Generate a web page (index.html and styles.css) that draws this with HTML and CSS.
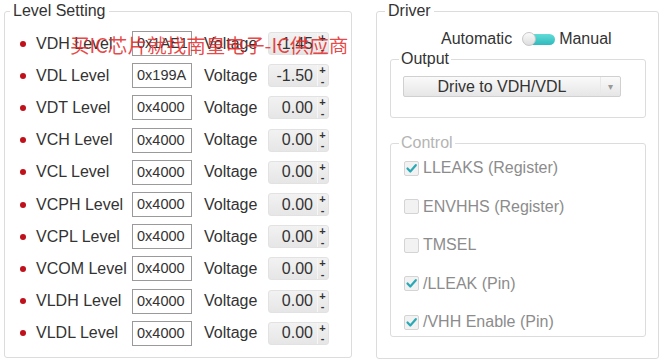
FILE: index.html
```html
<!DOCTYPE html>
<html>
<head>
<meta charset="utf-8">
<link rel="stylesheet" href="styles.css">
</head>
<body>
<div class="page">
  <fieldset class="panel level">
    <legend>Level Setting</legend>
    <div class="rows">
      <div class="row"><span class="dot"></span><span class="lbl">VDH Level</span><span class="hex">0x1AE1</span><span class="vlt">Voltage</span><span class="spin"><span class="val">-1.45</span><span class="arr"><i>+</i><i>-</i></span></span></div>
      <div class="row"><span class="dot"></span><span class="lbl">VDL Level</span><span class="hex">0x199A</span><span class="vlt">Voltage</span><span class="spin"><span class="val">-1.50</span><span class="arr"><i>+</i><i>-</i></span></span></div>
      <div class="row"><span class="dot"></span><span class="lbl">VDT Level</span><span class="hex">0x4000</span><span class="vlt">Voltage</span><span class="spin"><span class="val">0.00</span><span class="arr"><i>+</i><i>-</i></span></span></div>
      <div class="row"><span class="dot"></span><span class="lbl">VCH Level</span><span class="hex">0x4000</span><span class="vlt">Voltage</span><span class="spin"><span class="val">0.00</span><span class="arr"><i>+</i><i>-</i></span></span></div>
      <div class="row"><span class="dot"></span><span class="lbl">VCL Level</span><span class="hex">0x4000</span><span class="vlt">Voltage</span><span class="spin"><span class="val">0.00</span><span class="arr"><i>+</i><i>-</i></span></span></div>
      <div class="row"><span class="dot"></span><span class="lbl">VCPH Level</span><span class="hex">0x4000</span><span class="vlt">Voltage</span><span class="spin"><span class="val">0.00</span><span class="arr"><i>+</i><i>-</i></span></span></div>
      <div class="row"><span class="dot"></span><span class="lbl">VCPL Level</span><span class="hex">0x4000</span><span class="vlt">Voltage</span><span class="spin"><span class="val">0.00</span><span class="arr"><i>+</i><i>-</i></span></span></div>
      <div class="row"><span class="dot"></span><span class="lbl">VCOM Level</span><span class="hex">0x4000</span><span class="vlt">Voltage</span><span class="spin"><span class="val">0.00</span><span class="arr"><i>+</i><i>-</i></span></span></div>
      <div class="row"><span class="dot"></span><span class="lbl">VLDH Level</span><span class="hex">0x4000</span><span class="vlt">Voltage</span><span class="spin"><span class="val">0.00</span><span class="arr"><i>+</i><i>-</i></span></span></div>
      <div class="row"><span class="dot"></span><span class="lbl">VLDL Level</span><span class="hex">0x4000</span><span class="vlt">Voltage</span><span class="spin"><span class="val">0.00</span><span class="arr"><i>+</i><i>-</i></span></span></div>
    </div>
  </fieldset>

  <fieldset class="panel driver">
    <legend>Driver</legend>
    <div class="mode">
      <span>Automatic</span>
      <span class="toggle"><span class="knob"></span></span>
      <span>Manual</span>
    </div>
    <fieldset class="sub output">
      <legend>Output</legend>
      <div class="select"><span class="sel-text">Drive to VDH/VDL</span><span class="sel-arrow">&#9662;</span></div>
    </fieldset>
    <fieldset class="sub control">
      <legend>Control</legend>
      <div class="checks">
        <div class="chk"><span class="box"><svg viewBox="0 0 15 15" width="15" height="15"><path d="M3.5 7.5 L6.3 10.5 L11.8 4.2" fill="none" stroke="#2aa9b5" stroke-width="2.2" stroke-linecap="round" stroke-linejoin="round"/></svg></span><span>LLEAKS (Register)</span></div>
        <div class="chk"><span class="box"></span><span>ENVHHS (Register)</span></div>
        <div class="chk"><span class="box"></span><span>TMSEL</span></div>
        <div class="chk"><span class="box"><svg viewBox="0 0 15 15" width="15" height="15"><path d="M3.5 7.5 L6.3 10.5 L11.8 4.2" fill="none" stroke="#2aa9b5" stroke-width="2.2" stroke-linecap="round" stroke-linejoin="round"/></svg></span><span>/LLEAK (Pin)</span></div>
        <div class="chk"><span class="box"><svg viewBox="0 0 15 15" width="15" height="15"><path d="M3.5 7.5 L6.3 10.5 L11.8 4.2" fill="none" stroke="#2aa9b5" stroke-width="2.2" stroke-linecap="round" stroke-linejoin="round"/></svg></span><span>/VHH Enable (Pin)</span></div>
      </div>
    </fieldset>
  </fieldset>

  <div class="watermark">买IC芯片就找南皇电子-IC供应商</div>
</div>
</body>
</html>
```

FILE: styles.css
```css
html, body {
  margin: 0;
  padding: 0;
  background: #fff;
}
body {
  font-family: "Liberation Sans", Arial, sans-serif;
  font-size: 16px;
  color: #333;
}
.page {
  position: relative;
  width: 665px;
  height: 362px;
  display: flex;
  align-items: flex-start;
  padding: 2px 0 0 4px;
  box-sizing: border-box;
}
fieldset {
  margin: 0;
  border: 1px solid #dcdcdc;
  border-radius: 3px;
  box-sizing: border-box;
}
legend {
  padding: 0 3px;
  line-height: 18px;
  font-size: 16px;
  color: #333;
}
.panel.level {
  width: 348px;
  height: 356px;
  padding: 0 0 0 5px;
}
.rows {
  display: flex;
  flex-direction: column;
  padding-top: 7.5px;
}
.row {
  height: 32.2px;
  display: flex;
  align-items: center;
}
.dot {
  width: 6px;
  height: 6px;
  border-radius: 50%;
  background: #c0101a;
  margin-left: 10px;
  margin-right: 10px;
  flex: none;
}
.lbl {
  width: 96px;
  white-space: nowrap;
  color: #333;
}
.hex {
  box-sizing: border-box;
  width: 60px;
  height: 25px;
  border: 1px solid #9a9a9a;
  font-size: 14.5px;
  line-height: 23px;
  padding-left: 4px;
  color: #333;
  flex: none;
}
.vlt {
  margin-left: 12px;
  width: 64px;
  flex: none;
}
.spin {
  box-sizing: border-box;
  width: 61px;
  height: 23px;
  border: 1px solid #e2e2e2;
  border-radius: 3px;
  background: linear-gradient(#f2f2f2, #e6e6e6);
  display: flex;
  align-items: center;
  justify-content: flex-end;
  flex: none;
}
.val {
  font-size: 16px;
  color: #333;
  margin-right: 4px;
}
.arr {
  display: flex;
  flex-direction: column;
  width: 9px;
  height: 21px;
  border-left: 1px solid #f6f6f6;
  margin-right: 1px;
}
.arr i {
  font-style: normal;
  font-size: 11px;
  font-weight: bold;
  line-height: 10px;
  height: 10.5px;
  text-align: center;
  color: #333;
}
.panel.driver {
  margin-left: 24px;
  width: 283px;
  height: 357px;
  padding: 0 12px 0 8px;
}
.mode {
  display: flex;
  align-items: center;
  height: 20px;
  margin-top: 9px;
  padding-left: 56px;
  color: #333;
}
.toggle {
  position: relative;
  width: 32px;
  height: 11px;
  border-radius: 6px;
  background: linear-gradient(#62dcd6, #2fb9be);
  margin: 0 4px 0 11px;
  flex: none;
}
.knob {
  position: absolute;
  left: -1px;
  top: -2px;
  width: 14px;
  height: 14px;
  border-radius: 50%;
  background: linear-gradient(#fafafa, #dedede);
  border: 1px solid #c8c8c8;
  box-sizing: border-box;
}
.sub {
  width: 256px;
  margin-left: 5px;
  padding: 0 0 0 8px;
}
.sub legend {
  padding: 0 2px;
}
.output {
  margin-top: 1px;
  height: 68px;
}
.select {
  box-sizing: border-box;
  width: 218px;
  height: 21px;
  margin-top: 8px;
  margin-left: 4px;
  border: 1px solid #d0d0d0;
  border-radius: 2px;
  background: linear-gradient(#fafafa, #e6e6e6);
  display: flex;
  align-items: center;
}
.sel-text {
  width: 196px;
  text-align: center;
  color: #333;
  line-height: 19px;
}
.sel-arrow {
  flex: 1;
  height: 19px;
  border-left: 1px solid #e8e8e8;
  color: #999;
  font-size: 10px;
  line-height: 19px;
  text-align: center;
}
.control {
  margin-top: 16px;
  height: 203px;
}
.control legend {
  color: #b4b4b4;
}
.checks {
  display: flex;
  flex-direction: column;
  margin-top: -3px;
}
.chk {
  height: 38.5px;
  display: flex;
  align-items: center;
  color: #8c8c8c;
}
.box {
  box-sizing: border-box;
  width: 15px;
  height: 15px;
  margin-left: 5px;
  margin-right: 4px;
  border: 1px solid #d4d4d4;
  border-radius: 2px;
  background: #f2f2f2;
  display: flex;
  flex: none;
}
.box svg {
  margin: -1px;
}
.watermark {
  position: absolute;
  left: 70px;
  top: 33px;
  font-family: "Noto Sans CJK SC", "Liberation Sans", sans-serif;
  font-size: 19.6px;
  line-height: 24px;
  color: rgba(228, 40, 40, 0.85);
  white-space: nowrap;
  pointer-events: none;
}
```
